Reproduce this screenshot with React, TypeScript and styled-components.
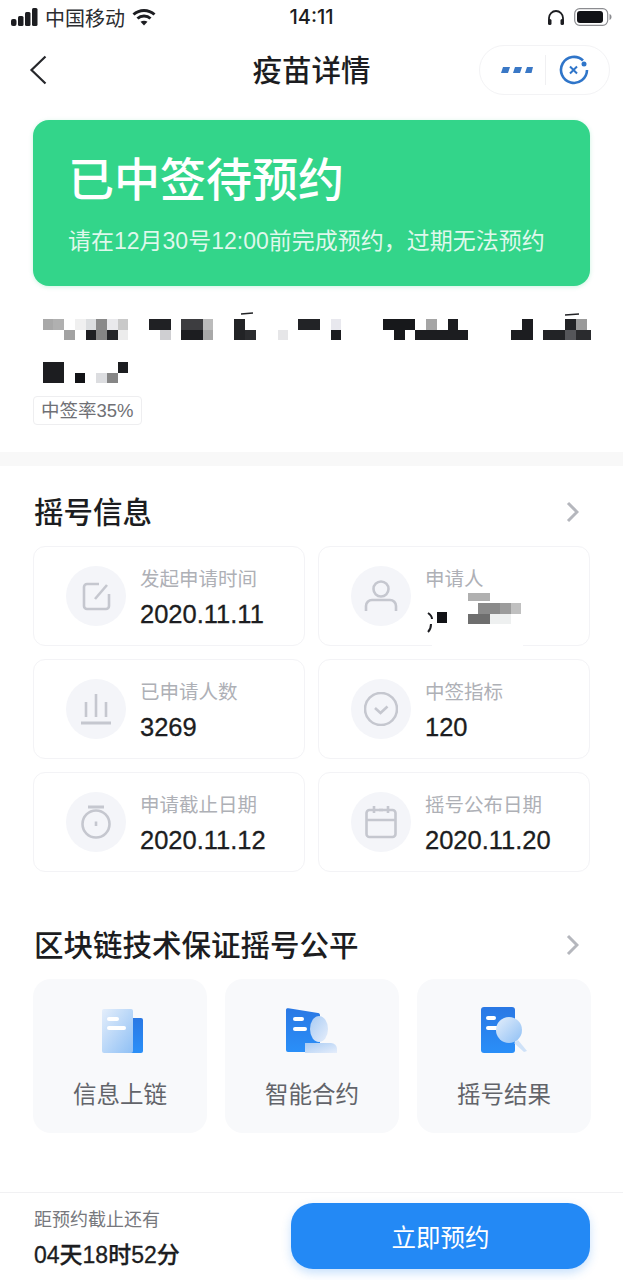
import React from 'react';
import styled, { createGlobalStyle } from 'styled-components';

const GlobalStyle = createGlobalStyle`
  * {
    box-sizing: border-box;
  }
  html, body {
    margin: 0;
    padding: 0;
    background: #ffffff;
  }
  body {
    font-family: "Liberation Sans", "Noto Sans CJK SC", sans-serif;
    color: #1c1d21;
  }
`;

const GREY = '#c5c7cf';

// 打码块: x0, x1, y0, y1 (px in the panel), colour
type Block = [number, number, number, number, string];

const titleBlocks: Block[] = [
  [10, 20, 1, 12, '#a8a8a8'], [20, 31, 1, 12, '#b0b0b0'], [31, 42, 12, 22, '#a2a2a2'],
  [42, 53, 1, 12, '#f0f0f0'], [53, 63, 1, 12, '#dcdee0'], [63, 74, 1, 12, '#8a8a8a'],
  [53, 63, 12, 22, '#1f2023'], [63, 74, 12, 22, '#858585'], [74, 85, 12, 22, '#232427'],
  [74, 85, 1, 12, '#e9e9ec'], [85, 95, 1, 12, '#c9c9c9'], [85, 95, 12, 22, '#ececec'],
  [116, 138, 1, 12, '#202124'], [127, 138, 12, 22, '#cfcfd2'], [148, 170, 1, 12, '#3d3d40'],
  [148, 170, 12, 22, '#1c1d20'], [170, 180, 1, 12, '#bbbbbb'], [170, 180, 12, 22, '#a8a8a8'],
  [201, 212, 1, 22, '#222326'], [212, 223, 12, 22, '#2b2c2f'], [245, 255, 12, 22, '#e6e6e8'],
  [265, 287, 1, 12, '#222326'], [298, 308, 1, 12, '#e8e8ee'], [298, 308, 12, 22, '#1b1c1f'],
  [350, 382, 1, 12, '#17181b'], [361, 372, 12, 22, '#17181b'], [382, 435, 12, 22, '#1c1d20'],
  [393, 404, 1, 12, '#a5a5a5'], [415, 425, 1, 12, '#1c1d20'], [478, 489, 12, 22, '#1c1d20'],
  [489, 500, 1, 22, '#1c1d20'], [510, 532, 12, 22, '#222326'], [532, 543, 1, 12, '#222326'],
  [532, 543, 12, 22, '#55565a'], [543, 554, 1, 12, '#9a9a9a'], [543, 558, 12, 22, '#2a2b2e'],
  [10, 31, 44, 65, '#1c1d20'], [42, 52, 55, 65, '#121316'], [63, 74, 55, 65, '#dcdde0'],
  [74, 85, 55, 65, '#868686'], [85, 95, 44, 55, '#1c1d20'],
];

// 申请人姓名上的打码, 连同盖住卡片下边框的白块
const nameBlocks: Block[] = [
  [114, 205, 92, 103, '#ffffff'], [142, 192, 103, 112, '#ffffff'],
  [119, 129, 66, 77, '#111216'], [150, 172, 47, 55, '#b0b0b0'], [160, 182, 57, 68, '#8a8a8a'],
  [182, 193, 57, 68, '#9c9c9c'], [193, 203, 57, 68, '#c0c0c0'], [150, 172, 68, 78, '#6e6e6e'],
  [172, 193, 68, 78, '#eef0f0'],
];

const StatusIcons = {
  Signal: () => (
    <svg width="27" height="18" viewBox="0 0 27 18">
      <rect x="0" y="11" width="5.500" height="7" rx="2" fill="#1c1d21" />
      <rect x="7" y="8" width="5.500" height="10" rx="1.500" fill="#1c1d21" />
      <rect x="14" y="4" width="5.500" height="14" rx="1.500" fill="#1c1d21" />
      <rect x="21" y="0" width="5.500" height="18" rx="1.500" fill="#1c1d21" />
    </svg>
  ),
  Wifi: () => (
    <svg width="24" height="18" viewBox="0 0 24 18" fill="none" stroke="#1c1d21" strokeWidth="3">
      <path d="M1.500 6.500C7.500 1 16.500 1 22.500 6.500" />
      <path d="M5.500 10.500C9 7.300 15 7.300 18.500 10.500" />
      <path d="M12 17.500L8.500 13.800C10.500 12.300 13.500 12.300 15.500 13.800Z" fill="#1c1d21" stroke="none" />
    </svg>
  ),
  Headphones: () => (
    <svg width="18" height="17" viewBox="0 0 18 17" fill="none">
      <path d="M2 13V9a7 7 0 0 1 14 0v4" stroke="#1c1d21" strokeWidth="1.800" />
      <rect x="1" y="10" width="3.500" height="6" rx="1.500" fill="#1c1d21" />
      <rect x="13.500" y="10" width="3.500" height="6" rx="1.500" fill="#1c1d21" />
    </svg>
  ),
  Battery: () => (
    <svg width="38" height="18" viewBox="0 0 38 18" fill="none">
      <rect x="0.700" y="0.700" width="33" height="16.600" rx="5" stroke="#8b8c90" strokeWidth="1.200" />
      <rect x="3" y="3" width="26" height="12" rx="3" fill="#111216" />
      <path d="M35.500 6v6c1.300-.4 2-1.600 2-3s-.7-2.600-2-3z" fill="#8b8c90" />
    </svg>
  ),
};

const BackArrow = () => (
  <svg width="18" height="30" viewBox="0 0 18 30" fill="none">
    <path d="M16.500 1.500L2.500 15l14 13.500" stroke="#26272b" strokeWidth="2.200" />
  </svg>
);

const MoreArrow = () => (
  <svg width="13" height="22" viewBox="0 0 13 22" fill="none">
    <path d="M2 2l9 9-9 9" stroke="#b5b7bd" strokeWidth="3" />
  </svg>
);

const infoIcons: Record<string, React.ReactNode> = {
  edit: (
    <>
      <path d="M19 4H7a3 3 0 0 0-3 3v19a3 3 0 0 0 3 3h19a3 3 0 0 0 3-3V14" />
      <path d="M27 5L15 19" />
    </>
  ),
  person: (
    <>
      <circle cx="16" cy="9" r="7.500" />
      <path d="M1 31v-5a6 6 0 0 1 6-6h18a6 6 0 0 1 6 6v5" />
    </>
  ),
  chart: (
    <>
      <path d="M1 30h30" strokeWidth="3" />
      <path d="M16 1v23M6 9v15M26 9v15" />
    </>
  ),
  check: (
    <>
      <circle cx="16" cy="16" r="16" />
      <path d="M10 15l5.500 5 7-6.500" />
    </>
  ),
  timer: (
    <>
      <path d="M8 1h16" strokeWidth="3" />
      <circle cx="16" cy="18" r="13.500" />
      <path d="M16 15.500v4.500" />
    </>
  ),
  calendar: (
    <>
      <rect x="1.500" y="4" width="29" height="27" rx="3" />
      <path d="M1.500 14h29M9 0v7M23 0v7M14 4h4" />
    </>
  ),
};

const infoCards = [
  { icon: 'edit', label: '发起申请时间', value: '2020.11.11' },
  { icon: 'person', label: '申请人', value: '', masked: true },
  { icon: 'chart', label: '已申请人数', value: '3269' },
  { icon: 'check', label: '中签指标', value: '120' },
  { icon: 'timer', label: '申请截止日期', value: '2020.11.12' },
  { icon: 'calendar', label: '摇号公布日期', value: '2020.11.20' },
];

const ChainIcon = ({ kind }: { kind: string }) => (
  <svg width="56" height="48" viewBox="0 0 56 48">
    <defs>
      <linearGradient id={`doc-${kind}`} x1="0" y1="0" x2="0" y2="1">
        <stop offset="0" stopColor="#2a78e4" />
        <stop offset="1" stopColor="#2a8ff8" />
      </linearGradient>
      <linearGradient id={`glass-${kind}`} x1="0" y1="0" x2="1" y2="1">
        <stop offset="0" stopColor="#e4eefb" />
        <stop offset="1" stopColor="#8fc0f5" />
      </linearGradient>
      <linearGradient id={`fade-${kind}`} x1="0" y1="0" x2="1" y2="1">
        <stop offset="0" stopColor="#a8cbf3" />
        <stop offset="1" stopColor="#e6eefb" />
      </linearGradient>
    </defs>
    {kind === 'chain' && (
      <g>
        <rect x="38" y="12" width="13" height="35" rx="2" fill={`url(#doc-${kind})`} />
        <rect x="10" y="3" width="31" height="44" rx="2" fill={`url(#glass-${kind})`} />
        <rect x="15" y="11" width="12" height="4" rx="2" fill="#ffffff" />
        <rect x="15" y="20" width="19" height="4" rx="2" fill="#ffffff" />
      </g>
    )}
    {kind === 'contract' && (
      <g>
        <path d="M2 4c0-1.500 1-2 2.500-1.700L34 7c1.500.3 2 1 2 2.500V44a2 2 0 0 1-2 2H4a2 2 0 0 1-2-2z" fill={`url(#doc-${kind})`} />
        <rect x="9" y="11" width="11" height="4" rx="2" fill="#ffffff" />
        <rect x="9" y="21" width="14" height="4" rx="2" fill="#ffffff" />
        <ellipse cx="35" cy="23" rx="9" ry="13" fill={`url(#fade-${kind})`} />
        <path d="M21 37h26a6 6 0 0 1 6 6v4H21z" fill={`url(#fade-${kind})`} />
      </g>
    )}
    {kind === 'result' && (
      <g>
        <rect x="5" y="1" width="34" height="46" rx="3" fill={`url(#doc-${kind})`} />
        <rect x="10" y="10" width="10" height="4" rx="2" fill="#ffffff" />
        <rect x="10" y="20" width="13" height="4" rx="2" fill="#ffffff" />
        <path d="M42 34l9 11-3 1-10-9z" fill="#cfe2f8" />
        <circle cx="33" cy="24" r="13" fill={`url(#glass-${kind})`} />
      </g>
    )}
  </svg>
);

const chainTiles = [
  { kind: 'chain', label: '信息上链' },
  { kind: 'contract', label: '智能合约' },
  { kind: 'result', label: '摇号结果' },
];

const Mosaic = ({ blocks, width, height, children }: { blocks: Block[]; width: number; height: number; children?: React.ReactNode }) => (
  <MosaicSvg width={width} height={height} viewBox={`0 0 ${width} ${height}`}>
    {blocks.map(([x0, x1, y0, y1, color], index) => (
      <rect key={index} x={x0} y={y0} width={x1 - x0} height={y1 - y0} fill={color} />
    ))}
    {children}
  </MosaicSvg>
);

const App: React.FC = () => {
  return (
    <Page>
      <GlobalStyle />
      <StatusBar>
        <StatusLeft>
          <StatusIcons.Signal />
          <Carrier>中国移动</Carrier>
          <StatusIcons.Wifi />
        </StatusLeft>
        <Clock>14:11</Clock>
        <StatusRight>
          <StatusIcons.Headphones />
          <StatusIcons.Battery />
        </StatusRight>
      </StatusBar>

      <NavBar>
        <BackSlot>
          <BackArrow />
        </BackSlot>
        <NavTitle>疫苗详情</NavTitle>
        <CapsuleSlot>
          <Capsule>
            <svg width="32" height="8" viewBox="0 0 32 8">
              <path d="M2 1h7l-2 6H0zM14 1h7l-2 6h-7zM26 1h6l-1.500 6H24z" fill="#3a78c6" />
            </svg>
            <CapsuleDivider />
            <svg width="30" height="30" viewBox="0 0 30 30" fill="none" stroke="#2f75c9">
              <path d="M24 5.500A13 13 0 1 0 28 15" strokeWidth="2.600" />
              <path d="M11 11.500l7 7M18 11.500l-7 7" strokeWidth="2" />
              <circle cx="25" cy="9" r="2.500" fill="#2f75c9" stroke="none" />
            </svg>
          </Capsule>
        </CapsuleSlot>
      </NavBar>

      <Banner>
        <BannerTitle>已中签待预约</BannerTitle>
        <BannerNote>请在12月30号12:00前完成预约，过期无法预约</BannerNote>
      </Banner>

      <TitleMask>
        <Mosaic blocks={titleBlocks} width={557} height={66}>
          <path d="M208 -4l12 -1M532 -3l14 -1" stroke="#222326" strokeWidth="1.500" />
        </Mosaic>
      </TitleMask>
      <RateTag>中签率35%</RateTag>
      <Band />

      <SectionHead>
        <SectionTitle>摇号信息</SectionTitle>
        <MoreArrow />
      </SectionHead>
      <InfoGrid>
        {infoCards.map((card) => (
          <InfoCard key={card.icon}>
            <IconCircle>
              <svg width="34" height="34" viewBox="-1 -1 34 34" fill="none" stroke={GREY} strokeWidth="2.600">
                {infoIcons[card.icon]}
              </svg>
            </IconCircle>
            <InfoText>
              <InfoLabel>{card.label}</InfoLabel>
              <InfoValue>{card.value}</InfoValue>
            </InfoText>
            {card.masked && (
              <MaskOverlay>
                <Mosaic blocks={nameBlocks} width={272} height={100}>
                  <path d="M110 67c3 2 4 4 4 6M113 78c0 3-1 6-3 8" fill="none" stroke="#1c1d21" strokeWidth="2" />
                </Mosaic>
              </MaskOverlay>
            )}
          </InfoCard>
        ))}
      </InfoGrid>

      <ChainHead>
        <SectionTitle>区块链技术保证摇号公平</SectionTitle>
        <MoreArrow />
      </ChainHead>
      <TileRow>
        {chainTiles.map((tile) => (
          <Tile key={tile.kind}>
            <ChainIcon kind={tile.kind} />
            <TileLabel>{tile.label}</TileLabel>
          </Tile>
        ))}
      </TileRow>

      <Footer>
        <Countdown>
          <CountdownLabel>距预约截止还有</CountdownLabel>
          <CountdownValue>04天18时52分</CountdownValue>
        </Countdown>
        <BookButton>立即预约</BookButton>
      </Footer>
    </Page>
  );
};

export default App;

const Page = styled.div`
  display: flex;
  flex-direction: column;
  width: 623px;
  height: 1280px;
  overflow: hidden;
  background: #ffffff;
`;

const StatusBar = styled.div`
  display: grid;
  grid-template-columns: 1fr auto 1fr;
  align-items: center;
  height: 34px;
  padding: 0 11px 0 11px;
`;

const StatusLeft = styled.div`
  display: flex;
  align-items: center;
  gap: 7px;
`;

const StatusRight = styled.div`
  display: flex;
  align-items: center;
  justify-content: flex-end;
  gap: 9px;
`;

const Carrier = styled.span`
  font-size: 20px;
  color: #2b2c30;
`;

const Clock = styled.span`
  font-size: 20px;
  font-weight: 500;
  font-family: "Inter", "Liberation Sans", sans-serif;
`;

const NavBar = styled.div`
  display: grid;
  grid-template-columns: 1fr auto 1fr;
  align-items: center;
  height: 72px;
  padding: 0 13px;
`;

const BackSlot = styled.div`
  display: flex;
  align-items: center;
  padding-left: 16px;
`;

const NavTitle = styled.div`
  padding-bottom: 4px;
  font-size: 29.500px;
  font-weight: 500;
`;

const CapsuleSlot = styled.div`
  display: flex;
  justify-content: flex-end;
`;

const Capsule = styled.div`
  display: flex;
  align-items: center;
  width: 131px;
  height: 50px;
  padding-left: 21px;
  border: 1px solid #f3f3f5;
  border-radius: 25px;
  background: #ffffff;

  svg:last-child {
    margin-left: 13px;
  }
`;

const CapsuleDivider = styled.div`
  width: 1px;
  height: 30px;
  margin-left: 12px;
  background: #f0f0f2;
`;

const Banner = styled.div`
  display: flex;
  flex-direction: column;
  width: 557px;
  height: 166px;
  margin: 14px 0 0 33px;
  padding: 30px 0 0 35px;
  border-radius: 16px;
  background: #33d58a;
  color: #ffffff;
  box-shadow: 0 1px 4px rgba(51, 213, 138, 0.25);
`;

const BannerTitle = styled.div`
  font-size: 46px;
  font-weight: 500;
  line-height: 60px;
`;

const BannerNote = styled.div`
  margin-top: 16px;
  font-size: 23px;
  line-height: 30px;
  color: rgba(255, 255, 255, 0.85);
`;

const TitleMask = styled.div`
  display: flex;
  height: 66px;
  margin: 32px 0 0 33px;
`;

const MosaicSvg = styled.svg`
  display: block;
  overflow: visible;
`;

const RateTag = styled.div`
  align-self: flex-start;
  height: 29px;
  margin: 12px 0 0 33px;
  padding: 0 7px;
  border: 1px solid #eeeef0;
  border-radius: 4px;
  font-size: 18.500px;
  line-height: 27px;
  color: #6f7075;
`;

const Band = styled.div`
  height: 14px;
  margin-top: 27px;
  background: #f8f8f8;
`;

const SectionHead = styled.div`
  display: flex;
  align-items: center;
  justify-content: space-between;
  height: 40px;
  margin-top: 26px;
  padding: 0 44px 0 34px;
`;

const ChainHead = styled(SectionHead)`
  margin-top: 53px;
`;

const SectionTitle = styled.div`
  padding-bottom: 4px;
  font-size: 29.500px;
  font-weight: 500;
`;

const InfoGrid = styled.div`
  display: grid;
  grid-template-columns: 272px 272px;
  grid-auto-rows: 100px;
  gap: 13px;
  margin: 14px 0 0 33px;
`;

const InfoCard = styled.div`
  position: relative;
  display: flex;
  align-items: center;
  gap: 14px;
  padding-left: 32px;
  border: 1px solid #f3f3f6;
  border-radius: 12px;
`;

const IconCircle = styled.div`
  display: flex;
  align-items: center;
  justify-content: center;
  flex: none;
  width: 60px;
  height: 60px;
  border-radius: 50%;
  background: #f4f5f9;
`;

const InfoText = styled.div`
  display: flex;
  flex-direction: column;
  gap: 5px;
  padding-top: 3px;
`;

const InfoLabel = styled.div`
  font-size: 19.500px;
  line-height: 28px;
  color: #aeb0b6;
`;

const InfoValue = styled.div`
  min-height: 32px;
  font-size: 25.500px;
  line-height: 32px;
  color: #1c1d21;
  -webkit-text-stroke: 0.3px #1c1d21;
`;

const MaskOverlay = styled.div`
  position: absolute;
  left: -1px;
  top: -1px;
`;

const TileRow = styled.div`
  display: grid;
  grid-template-columns: repeat(3, 174px);
  gap: 18px;
  margin: 14px 0 0 33px;
`;

const Tile = styled.div`
  display: flex;
  flex-direction: column;
  align-items: center;
  height: 154px;
  padding-top: 27px;
  border-radius: 18px;
  background: #f8f9fb;
`;

const TileLabel = styled.div`
  margin-top: 24px;
  font-size: 23.500px;
  line-height: 34px;
  color: #62646a;
`;

const Footer = styled.div`
  display: flex;
  align-items: flex-start;
  justify-content: space-between;
  height: 88px;
  margin-top: auto;
  padding: 10px 33px 0 34px;
  border-top: 1px solid #f1f1f3;
`;

const Countdown = styled.div`
  display: flex;
  flex-direction: column;
  padding-top: 4px;
`;

const CountdownLabel = styled.div`
  font-size: 18px;
  line-height: 26px;
  color: #77787d;
`;

const CountdownValue = styled.div`
  margin-top: 6px;
  font-size: 23px;
  line-height: 32px;
  font-weight: 500;
  -webkit-text-stroke: 0.3px #1c1d21;
`;

const BookButton = styled.button`
  width: 299px;
  height: 66px;
  border: none;
  border-radius: 22px;
  background: #2389f5;
  font-family: inherit;
  font-size: 24.500px;
  color: #ffffff;
  box-shadow: 0 4px 10px rgba(35, 137, 245, 0.25);
  cursor: pointer;
`;
